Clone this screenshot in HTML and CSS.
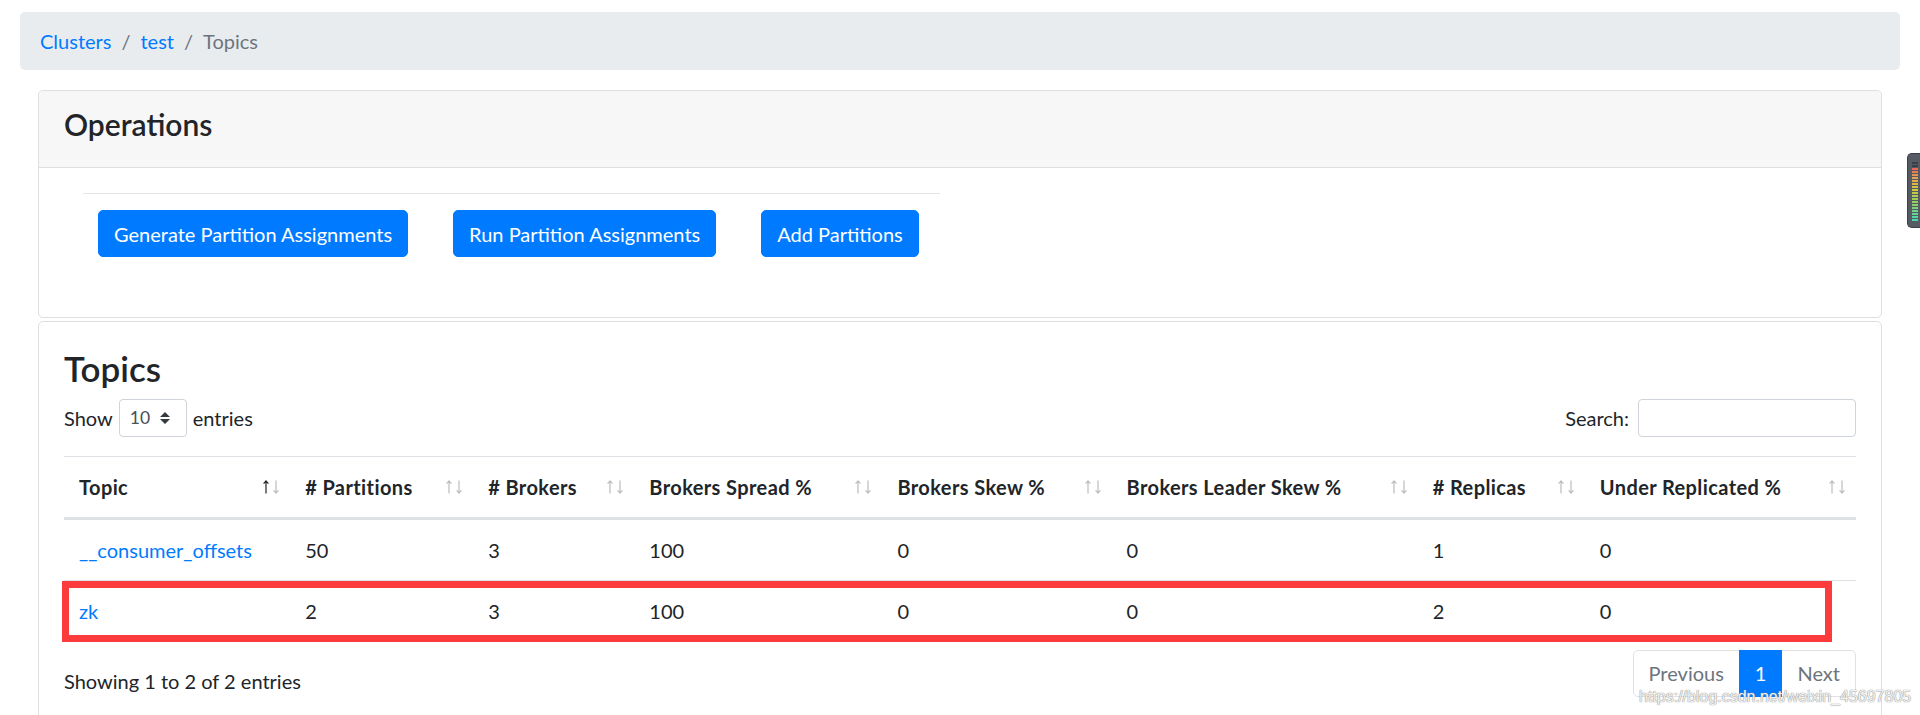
FILE: index.html
```html
<!DOCTYPE html>
<html lang="en">
<head>
<meta charset="utf-8">
<title>Topics</title>
<link rel="stylesheet" href="styles.css">
</head>
<body>
<div class="page">
  <nav class="breadcrumb">
    <a class="crumb-link" href="#">Clusters</a><span class="sep">/</span><a class="crumb-link" href="#">test</a><span class="sep">/</span><span class="crumb-active">Topics</span>
  </nav>

  <div class="content">
    <section class="card">
      <div class="card-header"><h4 class="card-title">Operations</h4></div>
      <div class="ops-body">
        <hr class="ops-rule">
        <div class="ops-buttons">
          <button class="btn">Generate Partition Assignments</button>
          <button class="btn">Run Partition Assignments</button>
          <button class="btn">Add Partitions</button>
        </div>
      </div>
    </section>

    <section class="card topics-card">
      <div class="topics-body">
        <h3 class="topics-title">Topics</h3>
        <div class="dt-top">
          <label class="dt-length">Show
            <span class="select">10
              <svg class="select-arrow" width="10" height="12" viewBox="0 0 10 12"><path d="M0 5 L5 0 L10 5 Z M0 7 L10 7 L5 12 Z" fill="#343a40"/></svg>
            </span>
            entries</label>
          <label class="dt-search">Search: <span class="search-input"></span></label>
        </div>

        <div class="table-wrap">
          <table class="dt-table">
            <colgroup>
              <col class="c1"><col class="c2"><col class="c3"><col class="c4"><col class="c5"><col class="c6"><col class="c7"><col class="c8">
            </colgroup>
            <thead>
              <tr>
                <th>Topic<svg class="sort sort-asc" width="17" height="14" viewBox="0 0 17 14"><g fill="none" stroke-width="1.2"><path class="up" d="M3 13.5 V1 M0.6 3.6 L3 1 L5.4 3.6"/><path class="down" d="M13 0.5 V13 M10.6 10.4 L13 13 L15.4 10.4"/></g></svg></th>
                <th># Partitions<svg class="sort" width="17" height="14" viewBox="0 0 17 14"><g fill="none" stroke-width="1.2"><path class="up" d="M3 13.5 V1 M0.6 3.6 L3 1 L5.4 3.6"/><path class="down" d="M13 0.5 V13 M10.6 10.4 L13 13 L15.4 10.4"/></g></svg></th>
                <th># Brokers<svg class="sort" width="17" height="14" viewBox="0 0 17 14"><g fill="none" stroke-width="1.2"><path class="up" d="M3 13.5 V1 M0.6 3.6 L3 1 L5.4 3.6"/><path class="down" d="M13 0.5 V13 M10.6 10.4 L13 13 L15.4 10.4"/></g></svg></th>
                <th>Brokers Spread %<svg class="sort" width="17" height="14" viewBox="0 0 17 14"><g fill="none" stroke-width="1.2"><path class="up" d="M3 13.5 V1 M0.6 3.6 L3 1 L5.4 3.6"/><path class="down" d="M13 0.5 V13 M10.6 10.4 L13 13 L15.4 10.4"/></g></svg></th>
                <th>Brokers Skew %<svg class="sort" width="17" height="14" viewBox="0 0 17 14"><g fill="none" stroke-width="1.2"><path class="up" d="M3 13.5 V1 M0.6 3.6 L3 1 L5.4 3.6"/><path class="down" d="M13 0.5 V13 M10.6 10.4 L13 13 L15.4 10.4"/></g></svg></th>
                <th>Brokers Leader Skew %<svg class="sort" width="17" height="14" viewBox="0 0 17 14"><g fill="none" stroke-width="1.2"><path class="up" d="M3 13.5 V1 M0.6 3.6 L3 1 L5.4 3.6"/><path class="down" d="M13 0.5 V13 M10.6 10.4 L13 13 L15.4 10.4"/></g></svg></th>
                <th># Replicas<svg class="sort" width="17" height="14" viewBox="0 0 17 14"><g fill="none" stroke-width="1.2"><path class="up" d="M3 13.5 V1 M0.6 3.6 L3 1 L5.4 3.6"/><path class="down" d="M13 0.5 V13 M10.6 10.4 L13 13 L15.4 10.4"/></g></svg></th>
                <th>Under Replicated %<svg class="sort" width="17" height="14" viewBox="0 0 17 14"><g fill="none" stroke-width="1.2"><path class="up" d="M3 13.5 V1 M0.6 3.6 L3 1 L5.4 3.6"/><path class="down" d="M13 0.5 V13 M10.6 10.4 L13 13 L15.4 10.4"/></g></svg></th>
              </tr>
            </thead>
            <tbody>
              <tr>
                <td><a class="topic-link" href="#">__consumer_offsets</a></td>
                <td>50</td><td>3</td><td>100</td><td>0</td><td>0</td><td>1</td><td>0</td>
              </tr>
              <tr>
                <td><a class="topic-link" href="#">zk</a></td>
                <td>2</td><td>3</td><td>100</td><td>0</td><td>0</td><td>2</td><td>0</td>
              </tr>
            </tbody>
          </table>
          <div class="highlight"></div>
        </div>

        <div class="dt-bottom">
          <div class="dt-info">Showing 1 to 2 of 2 entries</div>
          <ul class="pagination">
            <li class="page-item disabled"><span class="page-link">Previous</span></li>
            <li class="page-item active"><span class="page-link">1</span></li>
            <li class="page-item disabled"><span class="page-link">Next</span></li>
          </ul>
        </div>
      </div>
    </section>
  </div>
</div>

<div class="watermark">https://blog.csdn.net/weixin_45697805</div>
<div class="gadget"><div class="gadget-leds"></div></div>
</body>
</html>
```
FILE: styles.css
```css
html, body {
  height: 715px;
  overflow: hidden;
}

body {
  margin: 0;
  background: #fff;
  color: #212529;
  font-family: Lato, "Segoe UI", Roboto, sans-serif;
  font-size: 20px;
  line-height: 30px;
  position: relative;
}

a {
  color: #007bff;
  text-decoration: none;
}

.page {
  padding: 12px 20px 0 20px;
}

/* Breadcrumb */
.breadcrumb {
  display: flex;
  align-items: center;
  background: #e9ecef;
  border-radius: 5px;
  padding: 14px 20px;
  margin-bottom: 20px;
}

.sep {
  color: #6c757d;
  padding: 0 10px;
}

.crumb-active {
  color: #6c757d;
}

/* Cards */
.content {
  padding: 0 18px;
}

.card {
  border: 1px solid #dfdfdf;
  border-radius: 5px;
  background: #fff;
}

.card-header {
  background: #f7f7f7;
  border-bottom: 1px solid #dfdfdf;
  padding: 15px 25px;
  border-radius: 5px 5px 0 0;
}

.card-title {
  margin: 0 0 10px 0;
  font-size: 30px;
  font-weight: 600;
  line-height: 36px;
}

.ops-body {
  padding: 25px 25px 35px 44px;
}

.ops-rule {
  width: 857px;
  margin: 0 0 16px 0;
  border: 0;
  border-top: 1px solid #e5e5e5;
  height: 0;
}

.ops-buttons {
  display: flex;
  gap: 45px;
  padding-left: 15px;
  padding-bottom: 25px;
}

.btn {
  font-family: inherit;
  font-size: 20px;
  line-height: 30px;
  padding: 7.5px 15px;
  color: #fff;
  background: #007bff;
  border: 1px solid #007bff;
  border-radius: 5px;
}

.topics-card {
  margin-top: 3px;
}

.topics-body {
  padding: 25px 25px 60px 25px;
}

.topics-title {
  margin: 0 0 10px 0;
  font-size: 35px;
  font-weight: 600;
  line-height: 42px;
}

/* DataTables top controls */
.dt-top {
  display: flex;
  justify-content: space-between;
  align-items: center;
  height: 38px;
  margin-bottom: 19px;
}

.dt-length, .dt-search {
  display: flex;
  align-items: center;
}

.select {
  display: flex;
  align-items: center;
  box-sizing: border-box;
  width: 68px;
  height: 38px;
  margin: 0 6px;
  padding: 0 16px 0 10px;
  border: 1px solid #ced4da;
  border-radius: 4px;
  font-size: 17.5px;
  color: #495057;
}

.select-arrow {
  margin-left: auto;
}

.search-input {
  display: block;
  box-sizing: border-box;
  width: 218px;
  height: 38px;
  margin-left: 9px;
  border: 1px solid #ced4da;
  border-radius: 4px;
}

/* Table */
.table-wrap {
  position: relative;
}

.dt-table {
  width: 100%;
  border-collapse: collapse;
  table-layout: fixed;
}

.c1 { width: 226px; }
.c2 { width: 183px; }
.c3 { width: 161px; }
.c4 { width: 248px; }
.c5 { width: 229px; }
.c6 { width: 306px; }
.c7 { width: 167px; }
.c8 { width: 271px; }

.dt-table th {
  position: relative;
  text-align: left;
  font-weight: 700;
  letter-spacing: 0.4px;
  white-space: nowrap;
  padding: 15px 30px 15px 15px;
  border-top: 1px solid #dee2e6;
  border-bottom: 3px solid #dee2e6;
}

.dt-table td {
  padding: 15px;
  border-top: 1px solid #dee2e6;
}

.sort {
  position: absolute;
  right: 10px;
  top: 50%;
  margin-top: -7px;
}

.sort path {
  stroke: #212529;
  opacity: 0.3;
}

.sort-asc .up {
  opacity: 1;
}

.highlight {
  position: absolute;
  left: -2px;
  top: 125px;
  width: 1770px;
  height: 61px;
  box-sizing: border-box;
  border: 7px solid #fc3c3c;
}

/* Bottom */
.dt-bottom {
  display: flex;
  justify-content: space-between;
  align-items: flex-start;
  margin-top: 9px;
}

.dt-info {
  padding-top: 16px;
}

.pagination {
  display: flex;
  list-style: none;
  margin: 0;
  padding: 0;
}

.page-link {
  display: block;
  padding: 10px 15px;
  line-height: 25px;
  border: 1px solid #dee2e6;
  margin-left: -1px;
  color: #6c757d;
  background: #fff;
}

.page-item:first-child .page-link {
  margin-left: 0;
  border-radius: 5px 0 0 5px;
}

.page-item:last-child .page-link {
  border-radius: 0 5px 5px 0;
}

.page-item.active .page-link {
  background: #007bff;
  border-color: #007bff;
  color: #fff;
  position: relative;
}

/* Overlays */
.watermark {
  position: absolute;
  left: 1639px;
  top: 688px;
  font-family: "Liberation Sans", Arial, sans-serif;
  font-size: 16px;
  line-height: 18px;
  color: #f2f2f2;
  text-shadow: 0 0 1px #8a8a8a, 0 0 1px #8a8a8a;
  white-space: nowrap;
}

.gadget {
  position: absolute;
  left: 1907px;
  top: 153px;
  width: 13px;
  height: 75px;
  box-sizing: border-box;
  background: #555a63;
  border: 1px solid #3a3d44;
  border-right: 0;
  border-radius: 5px 0 0 5px;
}

.gadget-leds {
  position: absolute;
  left: 4px;
  top: 8px;
  width: 6px;
  height: 60px;
  background:
    repeating-linear-gradient(to bottom, transparent 0 2px, #555a63 2px 3px),
    linear-gradient(to bottom, #3a3e46 0 5px, #ee5a5a 5px, #e8a050 25%, #d4c840 45%, #90d060 68%, #40d8b8 100%);
}
```
